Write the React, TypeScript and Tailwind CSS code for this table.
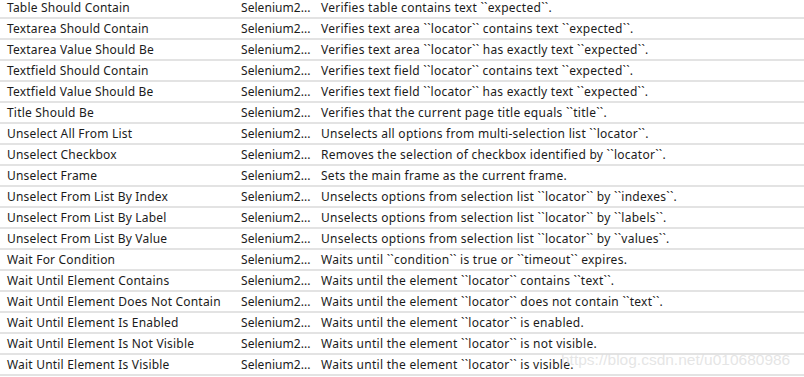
const rows: [string, string][] = [
  ['Table Should Contain', 'Verifies table contains text ``expected``.'],
  ['Textarea Should Contain', 'Verifies text area ``locator`` contains text ``expected``.'],
  ['Textarea Value Should Be', 'Verifies text area ``locator`` has exactly text ``expected``.'],
  ['Textfield Should Contain', 'Verifies text field ``locator`` contains text ``expected``.'],
  ['Textfield Value Should Be', 'Verifies text field ``locator`` has exactly text ``expected``.'],
  ['Title Should Be', 'Verifies that the current page title equals ``title``.'],
  ['Unselect All From List', 'Unselects all options from multi-selection list ``locator``.'],
  ['Unselect Checkbox', 'Removes the selection of checkbox identified by ``locator``.'],
  ['Unselect Frame', 'Sets the main frame as the current frame.'],
  ['Unselect From List By Index', 'Unselects options from selection list ``locator`` by ``indexes``.'],
  ['Unselect From List By Label', 'Unselects options from selection list ``locator`` by ``labels``.'],
  ['Unselect From List By Value', 'Unselects options from selection list ``locator`` by ``values``.'],
  ['Wait For Condition', 'Waits until ``condition`` is true or ``timeout`` expires.'],
  ['Wait Until Element Contains', 'Waits until the element ``locator`` contains ``text``.'],
  ['Wait Until Element Does Not Contain', 'Waits until the element ``locator`` does not contain ``text``.'],
  ['Wait Until Element Is Enabled', 'Waits until the element ``locator`` is enabled.'],
  ['Wait Until Element Is Not Visible', 'Waits until the element ``locator`` is not visible.'],
  ['Wait Until Element Is Visible', 'Waits until the element ``locator`` is visible.'],
];

export default function App() {
  return (
    <div className="relative w-[804px] h-[377px] overflow-hidden bg-white">
      <div className="-mt-[2px] flex flex-col font-['Noto_Sans',sans-serif] text-[12px] text-[#1b1b1b]">
        {rows.map(([keyword, doc]) => (
          <div
            key={keyword}
            className="flex h-[21px] items-center border-b-2 border-[#e3e3e3] leading-[19px] whitespace-nowrap"
          >
            <div className="w-[241px] pl-[7px] tracking-[0.2px]">{keyword}</div>
            <div className="w-[80px] tracking-[0.05px]">Selenium2...</div>
            <div className="flex-1 tracking-[0.27px]">{doc}</div>
          </div>
        ))}
      </div>
      {/* csdn watermark */}
      <div className="absolute left-[561px] top-[348px] font-['Liberation_Sans',sans-serif] text-[15.5px] text-[#dedede]/80">
        https://blog.csdn.net/u010680986
      </div>
    </div>
  );
}
